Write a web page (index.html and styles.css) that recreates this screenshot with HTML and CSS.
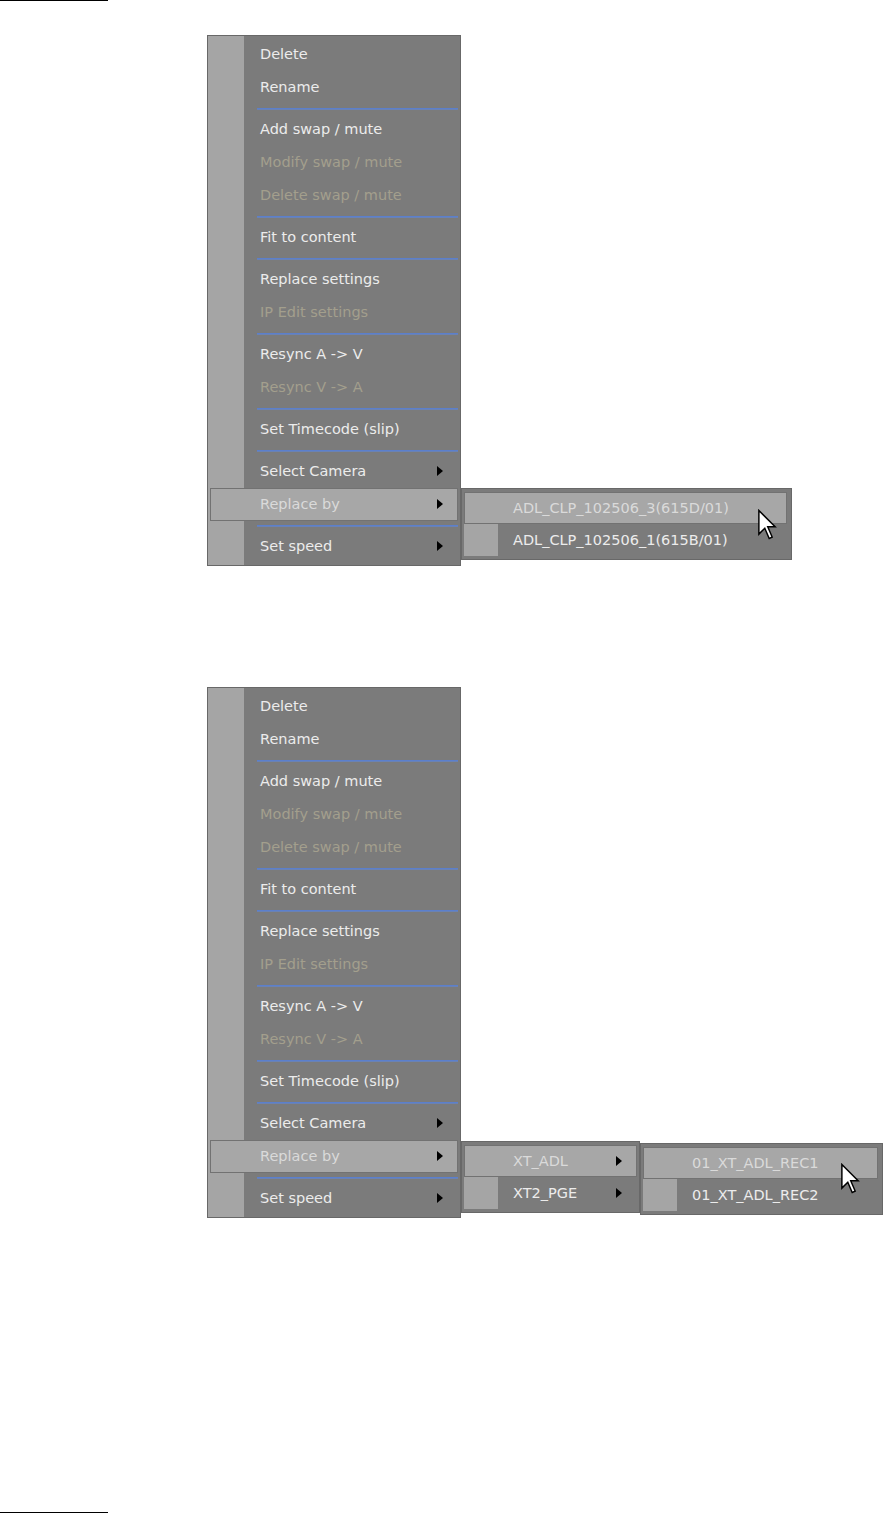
FILE: index.html
```html
<!DOCTYPE html>
<html lang="en">
<head>
  <meta charset="UTF-8">
  <title>Clip context menu</title>
  <link rel="stylesheet" href="styles.css">
</head>
<body>

  <div class="rule"></div>

  <div class="menu first">
    <div class="item">Delete</div>
    <div class="item">Rename</div>
    <div class="sep"></div>
    <div class="item">Add swap / mute</div>
    <div class="item off">Modify swap / mute</div>
    <div class="item off">Delete swap / mute</div>
    <div class="sep"></div>
    <div class="item">Fit to content</div>
    <div class="sep"></div>
    <div class="item">Replace settings</div>
    <div class="item off">IP Edit settings</div>
    <div class="sep"></div>
    <div class="item">Resync A -&gt; V</div>
    <div class="item off">Resync V -&gt; A</div>
    <div class="sep"></div>
    <div class="item">Set Timecode (slip)</div>
    <div class="sep"></div>
    <div class="item more">Select Camera</div>
    <div class="item more open">Replace by</div>
    <div class="sep"></div>
    <div class="item more">Set speed</div>

    <div class="submenu clips">
      <div class="item open">ADL_CLP_102506_3(615D/01)</div>
      <div class="item">ADL_CLP_102506_1(615B/01)</div>
      <svg class="cursor" width="20" height="31" viewBox="-1 -1 13 21">
        <polygon points="0,0 0,16 4,12 7,19 9,18 6,11 11,11" fill="#fff" stroke="#000" stroke-width="1"/>
      </svg>
    </div>
  </div>

  <div class="menu second">
    <div class="item">Delete</div>
    <div class="item">Rename</div>
    <div class="sep"></div>
    <div class="item">Add swap / mute</div>
    <div class="item off">Modify swap / mute</div>
    <div class="item off">Delete swap / mute</div>
    <div class="sep"></div>
    <div class="item">Fit to content</div>
    <div class="sep"></div>
    <div class="item">Replace settings</div>
    <div class="item off">IP Edit settings</div>
    <div class="sep"></div>
    <div class="item">Resync A -&gt; V</div>
    <div class="item off">Resync V -&gt; A</div>
    <div class="sep"></div>
    <div class="item">Set Timecode (slip)</div>
    <div class="sep"></div>
    <div class="item more">Select Camera</div>
    <div class="item more open">Replace by</div>
    <div class="sep"></div>
    <div class="item more">Set speed</div>

    <div class="submenu servers">
      <div class="item more open">XT_ADL</div>
      <div class="item more">XT2_PGE</div>

      <div class="submenu recorders">
        <div class="item open">01_XT_ADL_REC1</div>
        <div class="item">01_XT_ADL_REC2</div>
        <svg class="cursor" width="20" height="31" viewBox="-1 -1 13 21">
          <polygon points="0,0 0,16 4,12 7,19 9,18 6,11 11,11" fill="#fff" stroke="#000" stroke-width="1"/>
        </svg>
      </div>
    </div>
  </div>

  <div class="rule bottom"></div>

</body>
</html>
```

FILE: styles.css
```css
body {
  margin: 0;
  background: #ffffff;
  font-family: "DejaVu Sans", Tahoma, sans-serif;
  font-size: 14.5px;
  color: #ececec;
}
.rule {
  width: 108px;
  height: 1px;
  background: #000;
}
.rule.bottom {
  margin-top: 294px;
}

.menu, .submenu {
  box-sizing: border-box;
  border: 1px solid #686868;
  background: #7b7b7b;
}
.menu {
  position: relative;
  width: 254px;
  margin-left: 207px;
  padding: 2px;
  background: linear-gradient(to right, #a5a5a5 36px, #7b7b7b 36px);
}
.menu.first {
  margin-top: 34px;
}
.menu.second {
  margin-top: 121px;
}

.item {
  position: relative;
  height: 33px;
  line-height: 31px;
  padding-left: 49px;
  border: 1px solid transparent;
  box-sizing: border-box;
  white-space: nowrap;
}
.item.off {
  color: #a39f8d;
}
.item.more::after {
  content: "";
  position: absolute;
  right: 14px;
  top: 10px;
  border-left: 6px solid #000;
  border-top: 5px solid transparent;
  border-bottom: 5px solid transparent;
}

.sep {
  position: relative;
  height: 9px;
}
.sep::before {
  content: "";
  position: absolute;
  left: 47px;
  right: 0;
  top: 4px;
  height: 2px;
  background: linear-gradient(#5b7fcc 50%, #6a82b4 50%);
}

.submenu {
  position: absolute;
  padding: 3px 2px;
}
.submenu .item {
  height: 32px;
  line-height: 30px;
  padding-left: 48px;
  background: linear-gradient(to right, #a5a5a5 34px, transparent 34px);
  background-origin: border-box;
}
.item.open,
.submenu .item.open {
  background: #a7a7a7;
  border-color: #727272;
  color: #dadada;
}
.submenu.clips {
  left: 253px;
  top: 452px;
  width: 331px;
  padding-right: 4px;
}
.submenu.servers {
  left: 253px;
  top: 453px;
  width: 179px;
}
.submenu.recorders {
  left: 178px;
  top: 1px;
  width: 243px;
  padding-right: 4px;
}

.cursor {
  position: absolute;
  display: block;
}
.clips .cursor {
  left: 295px;
  top: 20px;
}
.recorders .cursor {
  left: 199px;
  top: 19px;
}
```
